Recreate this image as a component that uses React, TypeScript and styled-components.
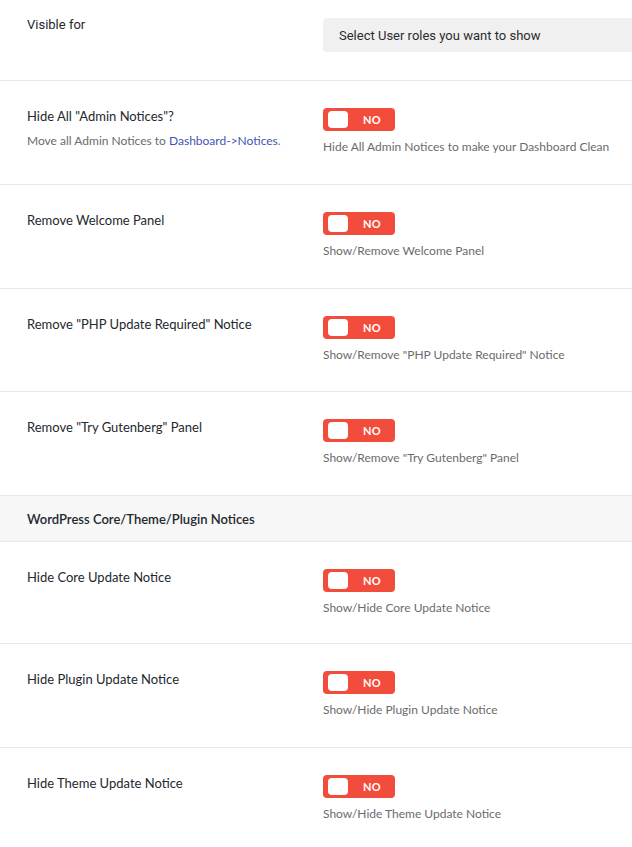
import styled, { createGlobalStyle } from "styled-components";

const GlobalStyle = createGlobalStyle`
  html, body {
    margin: 0;
    padding: 0;
    background: #ffffff;
    overflow: hidden;
  }
  body {
    font-family: Lato, "Open Sans", "Noto Sans", sans-serif;
    color: #23282d;
  }
`;

// ==================== Styled Components ====================

const Page = styled.div`
  width: 632px;
  display: flex;
  flex-direction: column;
`;

const Row = styled.div<{ $height: number; $top: number }>`
  display: grid;
  grid-template-columns: 296px 1fr;
  padding-left: 27px;
  padding-top: ${({ $top }) => $top}px;
  height: ${({ $height }) => $height}px;
  flex-shrink: 0;
  box-sizing: border-box;
  border-bottom: 1px solid #e8e8ea;
`;

const LabelCol = styled.div`
  display: flex;
  flex-direction: column;
  gap: 9px;
`;

const Label = styled.div<{ $plain?: boolean }>`
  font-family: ${({ $plain }) =>
    $plain ? "Roboto, 'Liberation Sans', sans-serif" : "inherit"};
  font-size: 13px;
  line-height: 16px;
  color: #23282d;
`;

const Hint = styled.div`
  font-size: 12px;
  line-height: 16px;
  color: #6b6b6b;

  a {
    color: #3f55b5;
    text-decoration: none;
  }
`;

const ControlCol = styled.div`
  display: flex;
  flex-direction: column;
  align-items: flex-start;
  gap: 8px;
`;

const SelectBox = styled.div`
  align-self: stretch;
  height: 34px;
  margin-top: 1px;
  background: #f0f0f1;
  border-radius: 4px 0 0 4px;
  display: flex;
  align-items: center;
  padding-left: 16px;
  font-family: Roboto, "Liberation Sans", sans-serif;
  font-size: 13px;
  color: #2c2c2c;
`;

const Toggle = styled.div`
  width: 72px;
  height: 23px;
  border-radius: 4px;
  background: #f24c3d;
  display: flex;
  align-items: center;
  padding-left: 5px;
  box-sizing: border-box;
  gap: 15px;
`;

const Knob = styled.span`
  width: 20px;
  height: 17px;
  border-radius: 4px;
  background: #ffffff;
`;

const ToggleText = styled.span`
  font-size: 11px;
  font-weight: 700;
  color: #ffffff;
  letter-spacing: 0.2px;
`;

const SectionHeader = styled.div`
  height: 46px;
  flex-shrink: 0;
  box-sizing: border-box;
  background: #f7f7f7;
  border-bottom: 1px solid #e8e8ea;
  display: flex;
  align-items: center;
  padding-left: 27px;
  font-size: 13px;
  font-weight: 600;
  color: #23282d;
`;

// ==================== Data ====================

interface Setting {
  label: string;
  desc: string;
  height: number;
  hint?: boolean;
}

const noticeSettings: Setting[] = [
  {
    label: 'Hide All "Admin Notices"?',
    desc: "Hide All Admin Notices to make your Dashboard Clean",
    height: 104,
    hint: true,
  },
  { label: "Remove Welcome Panel", desc: "Show/Remove Welcome Panel", height: 104 },
  {
    label: 'Remove "PHP Update Required" Notice',
    desc: 'Show/Remove "PHP Update Required" Notice',
    height: 103,
  },
  {
    label: 'Remove "Try Gutenberg" Panel',
    desc: 'Show/Remove "Try Gutenberg" Panel',
    height: 104,
  },
];

const coreSettings: Setting[] = [
  { label: "Hide Core Update Notice", desc: "Show/Hide Core Update Notice", height: 102 },
  { label: "Hide Plugin Update Notice", desc: "Show/Hide Plugin Update Notice", height: 104 },
  { label: "Hide Theme Update Notice", desc: "Show/Hide Theme Update Notice", height: 104 },
];

// ==================== Component ====================

function SettingRow({ setting }: { setting: Setting }) {
  return (
    <Row $height={setting.height} $top={27}>
      <LabelCol>
        <Label>{setting.label}</Label>
        {setting.hint && (
          <Hint>
            Move all Admin Notices to <a href="#">Dashboard-&gt;Notices</a>.
          </Hint>
        )}
      </LabelCol>
      <ControlCol>
        <Toggle>
          <Knob />
          <ToggleText>NO</ToggleText>
        </Toggle>
        <Hint>{setting.desc}</Hint>
      </ControlCol>
    </Row>
  );
}

export default function App() {
  return (
    <>
      <GlobalStyle />
      <Page>
        <Row $height={81} $top={17}>
          <LabelCol>
            <Label $plain>Visible for</Label>
          </LabelCol>
          <ControlCol>
            <SelectBox>Select User roles you want to show</SelectBox>
          </ControlCol>
        </Row>
        {noticeSettings.map((s) => (
          <SettingRow key={s.label} setting={s} />
        ))}
        <SectionHeader>WordPress Core/Theme/Plugin Notices</SectionHeader>
        {coreSettings.map((s) => (
          <SettingRow key={s.label} setting={s} />
        ))}
      </Page>
    </>
  );
}
